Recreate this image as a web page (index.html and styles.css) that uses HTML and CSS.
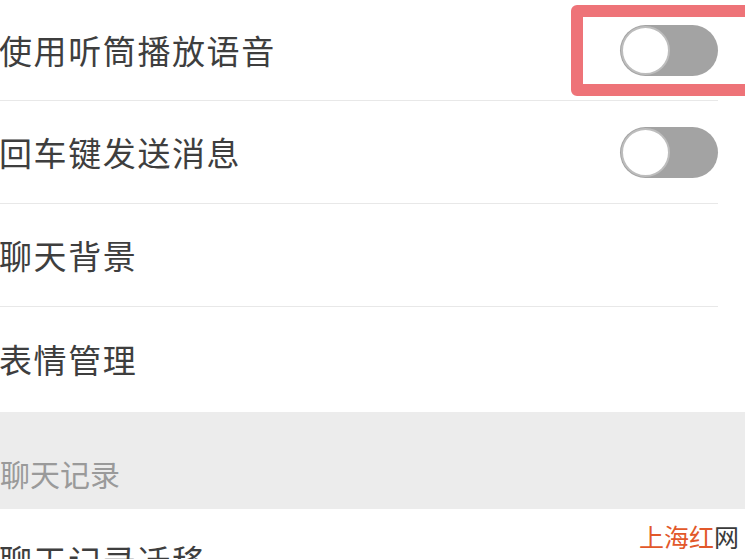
FILE: index.html
```html
<!DOCTYPE html>
<html>
<head>
<meta charset="utf-8">
<link rel="stylesheet" href="styles.css">
</head>
<body>
<div class="page">
  <div class="row first">
    <span class="label">使用听筒播放语音</span>
    <span class="toggle"><span class="knob"></span></span>
  </div>
  <div class="row">
    <span class="label">回车键发送消息</span>
    <span class="toggle"><span class="knob"></span></span>
  </div>
  <div class="row">
    <span class="label">聊天背景</span>
  </div>
  <div class="row last">
    <span class="label">表情管理</span>
  </div>
  <div class="section">聊天记录</div>
  <div class="row">
    <span class="label">聊天记录迁移</span>
  </div>
  <div class="highlight"></div>
  <div class="watermark"><span class="wm-red">上海红</span><span class="wm-dark">网</span></div>
</div>
</body>
</html>
```
FILE: styles.css
```css
html, body {
  margin: 0;
  padding: 0;
  background: #ffffff;
  overflow: hidden;
}
.page {
  position: relative;
  width: 745px;
  height: 559px;
  overflow: hidden;
  font-family: "Noto Sans CJK SC", "Noto Sans", sans-serif;
}
.row {
  display: flex;
  align-items: center;
  justify-content: space-between;
  height: 103px;
  margin-right: 27px;
  border-bottom: 1px solid #e8e8e8;
  box-sizing: border-box;
}
.row.first {
  height: 101px;
}
.row.last {
  border-bottom: none;
  height: 103px;
}
.label {
  font-size: 33px;
  color: #3e3e3e;
  letter-spacing: 1.6px;
  margin-left: -1px;
}
.toggle {
  position: relative;
  display: block;
  width: 98px;
  height: 51px;
  border-radius: 26px;
  background: #a3a3a3;
}
.knob {
  position: absolute;
  left: 1px;
  top: 1px;
  width: 45px;
  height: 45px;
  border-radius: 50%;
  background: #ffffff;
  border: 2px solid #bdbdbd;
}
.section {
  height: 97px;
  background: #ececec;
  display: flex;
  align-items: flex-end;
  padding-bottom: 14px;
  box-sizing: border-box;
  font-size: 30px;
  color: #9a9a9a;
  margin-top: 2px;
}
.highlight {
  position: absolute;
  left: 571px;
  top: 5px;
  width: 190px;
  height: 91px;
  border: 12px solid #ee7378;
  border-radius: 6px;
  box-sizing: border-box;
}
.watermark {
  position: absolute;
  left: 639px;
  top: 519px;
  font-size: 25px;
  line-height: 34px;
  font-family: "Noto Sans CJK SC", sans-serif;
}
.wm-red { color: #e2582a; }
.wm-dark { color: #3a3a3a; }
```
